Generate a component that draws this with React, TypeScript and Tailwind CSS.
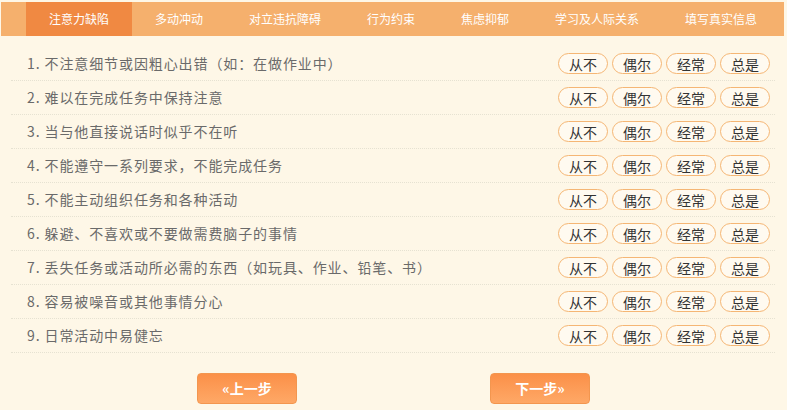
const tabs = [
  "注意力缺陷",
  "多动冲动",
  "对立违抗障碍",
  "行为约束",
  "焦虑抑郁",
  "学习及人际关系",
  "填写真实信息",
];

const questions = [
  "不注意细节或因粗心出错（如：在做作业中）",
  "难以在完成任务中保持注意",
  "当与他直接说话时似乎不在听",
  "不能遵守一系列要求，不能完成任务",
  "不能主动组织任务和各种活动",
  "躲避、不喜欢或不要做需费脑子的事情",
  "丢失任务或活动所必需的东西（如玩具、作业、铅笔、书）",
  "容易被噪音或其他事情分心",
  "日常活动中易健忘",
];

const options = ["从不", "偶尔", "经常", "总是"];

const font = "font-['Noto_Sans_CJK_SC',_'Noto_Sans',_sans-serif]";

const Option = ({ label }: { label: string }) => {
  return (
    <button className="flex h-[21px] w-[50px] items-center justify-center rounded-full border border-[#f5b674] bg-[#fffaf0] text-[14px] leading-none text-[#333]">
      {label}
    </button>
  );
};

const StepButton = ({ children }: { children: React.ReactNode }) => {
  return (
    <button className="flex h-[31px] w-[100px] items-center justify-center rounded-[4px] border border-[#f3964f] bg-gradient-to-b from-[#fb9048] to-[#fea866] text-[14px] font-bold text-white">
      {children}
    </button>
  );
};

export default function App() {
  return (
    <div className={`h-[410px] w-[787px] overflow-hidden bg-[#fef7e7] pt-[2px] ${font}`}>
      <nav className="ml-[1px] flex h-[34px] w-[783px] bg-[#f5b06d] pl-[25px]">
        {tabs.map((tab, index) => (
          <div
            key={tab}
            className={`flex h-full shrink-0 items-center whitespace-nowrap px-[23px] text-[12px] text-white ${
              index === 0 ? "bg-[#f08942]" : ""
            }`}
          >
            {tab}
          </div>
        ))}
      </nav>

      <ul className="mx-[11px] mt-[11px] w-[764px]">
        {questions.map((q, index) => (
          <li
            key={q}
            className="flex h-[34px] items-center justify-between border-b border-dotted border-[#e6e2d2] pl-[16px] pr-[5px]"
          >
            <span className="text-[14px] tracking-[0.9px] text-[#6a6a6a]">
              {index + 1}. {q}
            </span>
            <div className="flex gap-[4px]">
              {options.map((o) => (
                <Option key={o} label={o} />
              ))}
            </div>
          </li>
        ))}
      </ul>

      <div className="mt-[20px] flex justify-center gap-[193px]">
        <StepButton>«上一步</StepButton>
        <StepButton>下一步»</StepButton>
      </div>
    </div>
  );
}
